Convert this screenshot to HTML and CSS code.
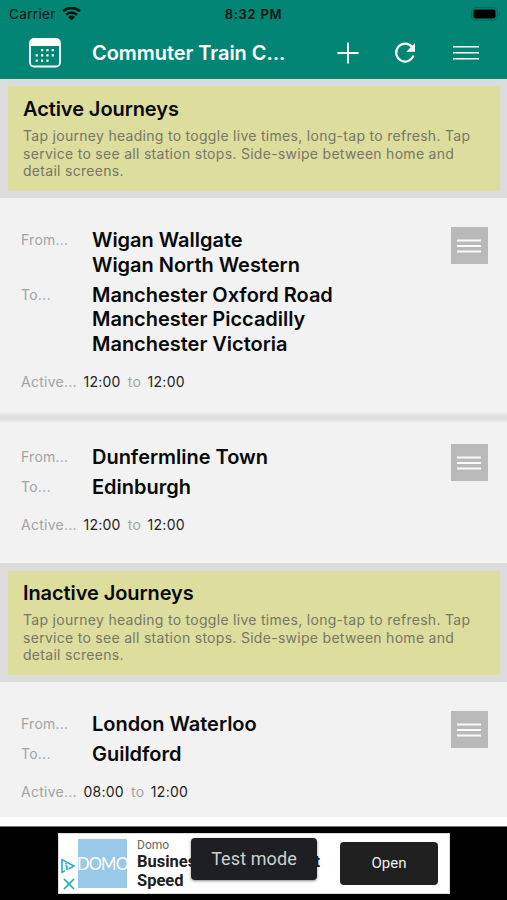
FILE: index.html
```html
<!DOCTYPE html>
<html lang="en">
<head>
<meta charset="utf-8">
<title>Commuter Train</title>
<link rel="stylesheet" href="styles.css">
</head>
<body>
<div class="app">
  <header class="header">
    <div class="status">
      <div class="carrier"><span>Carrier</span>
        <svg width="19" height="14" viewBox="0 0 19 14"><path d="M1 4.300Q9.500-2.600 18 4.300M4 7.800Q9.500 3.200 15 7.800" fill="none" stroke="#04150f" stroke-width="2.600"/><path d="M6 10Q9.500 7.200 13 10L9.500 13.600Z" fill="#04150f"/></svg>
      </div>
      <span class="clock">8:32 PM</span>
      <svg class="battery" width="30" height="14" viewBox="0 0 30 14"><rect x=".7" y=".7" width="25.600" height="12.600" rx="4" fill="none" stroke="#036e60" stroke-width="1.200"/><rect x="2.500" y="2.500" width="22" height="9" rx="2.200" fill="#000"/><path d="M28 5v4q1.500-.5 1.500-2T28 5" fill="#036e60"/></svg>
    </div>
    <div class="toolbar">
      <svg class="calendar" width="32" height="30" viewBox="0 0 32 30"><rect x="1" y="1" width="30" height="27.500" rx="4" fill="none" stroke="#fff" stroke-width="1.800"/><path d="M1 8V5q0-4 4-4h22q4 0 4 4v3z" fill="#fff"/><g fill="none" stroke="#fff" stroke-width="2.200" stroke-dasharray="2.200 3.150"><path d="M12 12.200h14.500M6.650 17.400h19.800M6.650 22.600h14.400"/></g></svg>
      <h1 class="title">Commuter Train C...</h1>
      <svg width="22" height="22" viewBox="0 0 22 22"><path d="M11 .5v21M.5 11h21" stroke="#fff" stroke-width="1.900"/></svg>
      <svg class="refresh" width="22" height="22" viewBox="0 0 22 22"><path d="M18 5A8.900 8.900 0 1 0 19.500 13.500" fill="none" stroke="#fff" stroke-width="2.200"/><path d="M21 1v8.700h-8.700z" fill="#fff"/></svg>
      <svg class="menu" width="26" height="16" viewBox="0 0 26 16"><path d="M0 1.700h26M0 7.700h26M0 13.700h26" stroke="#fff" stroke-width="1.600"/></svg>
    </div>
  </header>

  <section class="band first">
    <div class="note"><h2>Active Journeys</h2><p>Tap journey heading to toggle live times, long-tap to refresh. Tap<br>service to see all station stops. Side-swipe between home and<br>detail screens.</p></div>
  </section>

  <article class="journey">
    <dl class="route">
      <dt>From...</dt><dd>Wigan Wallgate<br>Wigan North Western</dd>
      <dt>To...</dt><dd>Manchester Oxford Road<br>Manchester Piccadilly<br>Manchester Victoria</dd>
    </dl>
    <p class="times">Active...<b>12:00</b><span>to</span><b>12:00</b></p>
    <span class="handle"><svg width="26" height="16" viewBox="0 0 26 16"><path d="M1 2.500h24M1 8h24M1 13.500h24" stroke="#fafafa" stroke-width="2"/></svg></span>
  </article>
  <div class="divider"></div>
  <article class="journey second">
    <dl class="route">
      <dt>From...</dt><dd>Dunfermline Town</dd>
      <dt>To...</dt><dd>Edinburgh</dd>
    </dl>
    <p class="times">Active...<b>12:00</b><span>to</span><b>12:00</b></p>
    <span class="handle"><svg width="26" height="16" viewBox="0 0 26 16"><path d="M1 2.500h24M1 8h24M1 13.500h24" stroke="#fafafa" stroke-width="2"/></svg></span>
  </article>

  <section class="band">
    <div class="note"><h2>Inactive Journeys</h2><p>Tap journey heading to toggle live times, long-tap to refresh. Tap<br>service to see all station stops. Side-swipe between home and<br>detail screens.</p></div>
  </section>

  <article class="journey third">
    <dl class="route">
      <dt>From...</dt><dd>London Waterloo</dd>
      <dt>To...</dt><dd>Guildford</dd>
    </dl>
    <p class="times">Active...<b>08:00</b><span>to</span><b>12:00</b></p>
    <span class="handle"><svg width="26" height="16" viewBox="0 0 26 16"><path d="M1 2.500h24M1 8h24M1 13.500h24" stroke="#fafafa" stroke-width="2"/></svg></span>
  </article>

  <footer class="footer">
    <div class="ad">
      <div class="marks">
        <svg width="14" height="16" viewBox="0 0 14 16"><path d="M4 12.800L1 14.300V1.700L13 8 7.500 11.100M5 5v1.500M4.500 8H6v4" fill="none" stroke="#18abc4" stroke-width="1.500"/></svg>
        <svg width="12" height="12" viewBox="0 0 12 12"><path d="M1 1l10 10M11 1L1 11" stroke="#18abc4" stroke-width="1.700"/></svg>
      </div>
      <div class="logo"><span>DOMO</span></div>
      <div class="copy"><small>Domo</small><p class="line"><span>Busines</span><span>t</span></p><p>Speed</p></div>
      <span class="open">Open</span>
    </div>
    <div class="toast">Test mode</div>
  </footer>
</div>
</body>
</html>
```
FILE: styles.css
```css
* { box-sizing: border-box; margin: 0; padding: 0; }
body { width: 507px; height: 900px; overflow: hidden; background: #fff; font-family: Inter, "Liberation Sans", sans-serif; color: #090909; }
svg { display: block; flex: none; }
.app { width: 507px; height: 900px; display: flex; flex-direction: column; }
.app > * { flex: none; }
.header { height: 79px; background: #038575; }
.status { height: 27px; display: grid; grid-template-columns: 1fr auto 1fr; align-items: center; padding: 0 6px 0 9px; color: #04150f; font-size: 13.5px; }
.carrier { display: flex; align-items: center; gap: 6px; letter-spacing: .35px; }
.clock { position: relative; left: -3px; font-weight: 600; letter-spacing: .75px; margin-right: -3px; font-size: 13px; }
.battery { justify-self: end; }
.toolbar { height: 52px; display: flex; align-items: center; padding: 0 28px 0 29px; color: #fff; }
.title { width: 215px; margin-left: 31px; margin-right: 30px; font-size: 20px; font-weight: 600; letter-spacing: -.06px; white-space: nowrap; }
.refresh { margin-left: 35px; }
.menu { margin-left: auto; }
.band { height: 119px; background: #dcdcdc; padding: 8px 7px 7px 8px; }
.first { padding-top: 7px; }
.note { height: 104px; background: #dddd9e; padding: 9px 15px; }
.first .note { height: 105px; padding-top: 10px; }
h2 { font-size: 20px; line-height: 26px; font-weight: 600; letter-spacing: -.08px; }
.note p { margin-top: 5px; font-size: 14px; line-height: 17.5px; color: #777766; letter-spacing: .29px; white-space: nowrap; }
.journey { position: relative; height: 215px; background: #f2f2f2; padding: 30px 21px 0; }
.route { display: grid; grid-template-columns: 71px 1fr; row-gap: 5px; }
dt { font-size: 14px; line-height: 24.8px; color: #a3a3a3; letter-spacing: .25px; }
dd { font-size: 20px; line-height: 24.8px; font-weight: 600; letter-spacing: -.02px; white-space: nowrap; }
.times { display: flex; margin-top: 15.5px; font-size: 14px; line-height: 20px; color: #a3a3a3; letter-spacing: .27px; }
.times b { font-weight: 400; color: #222; margin-left: 6.5px; }
.times span { margin-left: 7px; }
.handle { position: absolute; right: 19.5px; top: 29px; width: 37px; height: 37px; background: #b9b9b9; display: grid; place-items: center; }
.divider { height: 11px; margin-top: -1px; position: relative; background: linear-gradient(#f0f0f0, #dedede 40%, #dedede 65%, #f0f0f0); }
.second { height: 140px; padding-top: 22px; }
.second .handle { top: 21px; }
.third { height: 135px; }
.footer { position: relative; margin-top: 9px; height: 74px; background: #000; border-top: 1px solid #777; padding: 6px 57px 0 58px; }
.ad { height: 61px; border: 1px solid #ddd; background: #fff; display: flex; font-family: Roboto, sans-serif; }
.marks { width: 19px; padding: 24px 0 0 2px; display: flex; flex-direction: column; gap: 4px; }
.marks svg + svg { margin-left: 2px; }
.logo { width: 49px; height: 49px; margin-top: 5px; background: #99c8e8; color: #fff; display: grid; place-content: center; font: 16.500px/20px Lato, sans-serif; letter-spacing: -.8px; }
.copy { width: 193px; padding: 3px 0 0 10px; color: #202020; font-size: 16.500px; line-height: 18.500px; font-weight: 700; }
.copy small { display: block; font-size: 12px; line-height: 16px; font-weight: 400; color: #666; }
.line { display: flex; justify-content: space-between; }
.open { width: 98px; height: 43px; margin: 8px 0 0 20px; border-radius: 4px; background: #202020; color: #eee; font-size: 15px; line-height: 43px; text-align: center; }
.toast { position: absolute; left: 191px; top: 11px; width: 126px; height: 42px; border-radius: 4px; background: #1d1f23; color: #d0d0d0; font: 18px/42px Roboto, sans-serif; letter-spacing: .1px; text-align: center; box-shadow: 0 1px 3px #0007; }
```
